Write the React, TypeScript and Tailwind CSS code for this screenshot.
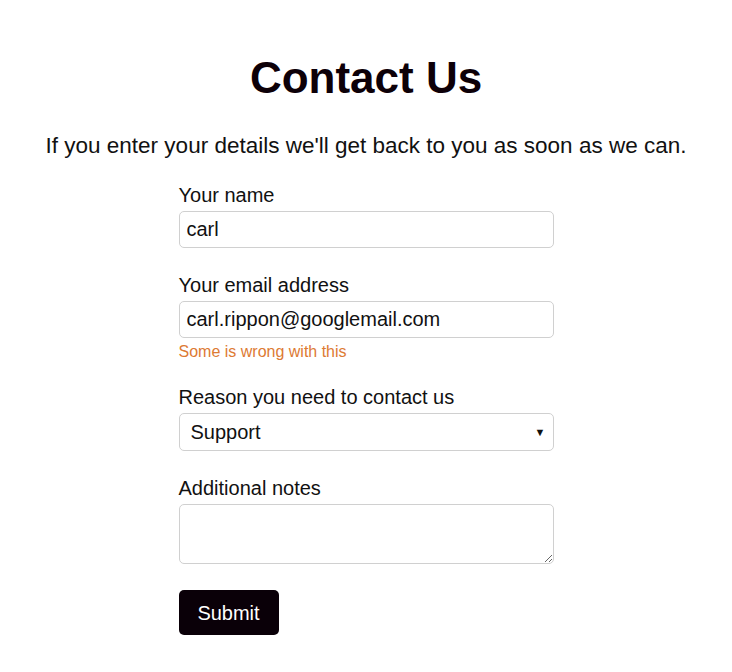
export default function App() {
  return (
    <div className="min-h-screen bg-white text-[#111] font-['Liberation_Sans',Arial,sans-serif]">
      <div className="flex flex-col items-center pt-[50px]">
        <h1 className="text-[44px] font-bold leading-[56px] text-[#0d0008]">Contact Us</h1>
        <p className="mt-[27px] text-[22.5px] leading-[26px]">
          If you enter your details we'll get back to you as soon as we can.
        </p>
        <form className="mt-[24px] flex w-[375px] flex-col" onSubmit={(e) => e.preventDefault()}>
          <div className="flex flex-col">
            <label className="text-[20px] leading-[24px]">Your name</label>
            <input
              type="text"
              defaultValue="carl"
              className="mt-[4px] h-[37px] rounded-[5px] border border-[#d0d0d0] px-[7px] text-[20px] outline-none"
            />
          </div>
          <div className="mt-[25px] flex flex-col">
            <label className="text-[20px] leading-[24px]">Your email address</label>
            <input
              type="email"
              defaultValue="carl.rippon@googlemail.com"
              className="mt-[4px] h-[37px] rounded-[5px] border border-[#d0d0d0] px-[7px] text-[20px] outline-none"
            />
            <span className="mt-[4px] text-[16px] leading-[20px] text-[#dd7a33]">Some is wrong with this</span>
          </div>
          <div className="mt-[23px] flex flex-col">
            <label className="text-[20px] leading-[24px]">Reason you need to contact us</label>
            <div className="relative mt-[4px] flex h-[38px] items-center rounded-[5px] border border-[#d0d0d0] pl-[11px] text-[20px]">
              Support
              <span className="absolute right-[7px] top-[11px] text-[11px] leading-[14px]">▼</span>
            </div>
          </div>
          <div className="mt-[25px] flex flex-col">
            <label className="text-[20px] leading-[24px]">Additional notes</label>
            <textarea className="mt-[4px] h-[60px] rounded-[5px] border border-[#d0d0d0] px-[7px] text-[20px] outline-none" />
          </div>
          <div className="mt-[26px]">
            <button
              type="submit"
              className="h-[45px] w-[100px] rounded-[5px] bg-[#0a0008] text-[20px] text-white"
            >
              Submit
            </button>
          </div>
        </form>
      </div>
    </div>
  )
}
